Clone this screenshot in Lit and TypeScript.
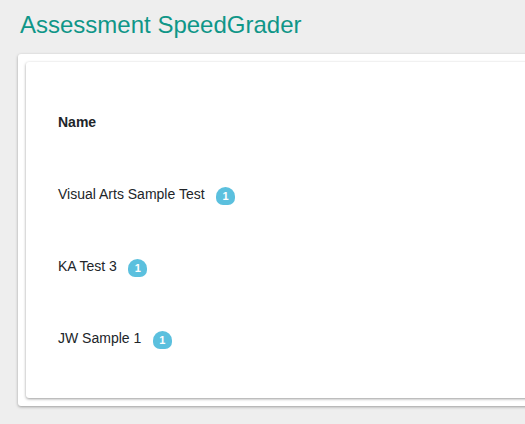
import { LitElement, html, css } from "lit";
import { customElement } from "lit/decorators.js";

const rows = [
  ["Visual Arts Sample Test", 1],
  ["KA Test 3", 1],
  ["JW Sample 1", 1],
];

@customElement("app-root")
export class AppRoot extends LitElement {
  static styles = css`
    :host {
      display: block;
      height: 424px;
      width: 525px;
      overflow: hidden;
      background: #eeeeee;
      font-family: "Liberation Sans", Arial, sans-serif;
    }
    h1 {
      margin: 0;
      padding: 10px 0 0 20px;
      height: 54px;
      box-sizing: border-box;
      font: 400 24px/30px "Liberation Sans", Arial, sans-serif;
      color: #0f9688;
    }
    .outer {
      margin-left: 18px;
      width: 560px;
      height: 352px;
      box-sizing: border-box;
      padding: 8px;
      background: #fff;
      border-radius: 3px;
      box-shadow: 0 1px 3px rgba(0, 0, 0, 0.35);
    }
    .inner {
      height: 336px;
      box-sizing: border-box;
      padding: 24px 32px;
      background: #fff;
      border-radius: 3px;
      box-shadow: 0 1px 3px rgba(0, 0, 0, 0.4);
    }
    .row {
      height: 72px;
      display: flex;
      align-items: center;
      font-size: 14px;
      color: #212529;
    }
    .head {
      font-weight: 700;
    }
    .badge {
      margin-left: 11.5px;
      margin-top: 4px;
      width: 19px;
      height: 18px;
      border-radius: 9.5px 9.5px 7px 7px;
      background: #5bc0de;
      color: #fff;
      font-size: 11px;
      font-weight: 700;
      display: flex;
      align-items: center;
      justify-content: center;
    }
  `;

  render() {
    return html`
      <h1>Assessment SpeedGrader</h1>
      <div class="outer">
        <div class="inner">
          <div class="row head">Name</div>
          ${rows.map(
            ([name, n]) => html`<div class="row">
              <span>${name}</span><span class="badge">${n}</span>
            </div>`
          )}
        </div>
      </div>
    `;
  }
}
